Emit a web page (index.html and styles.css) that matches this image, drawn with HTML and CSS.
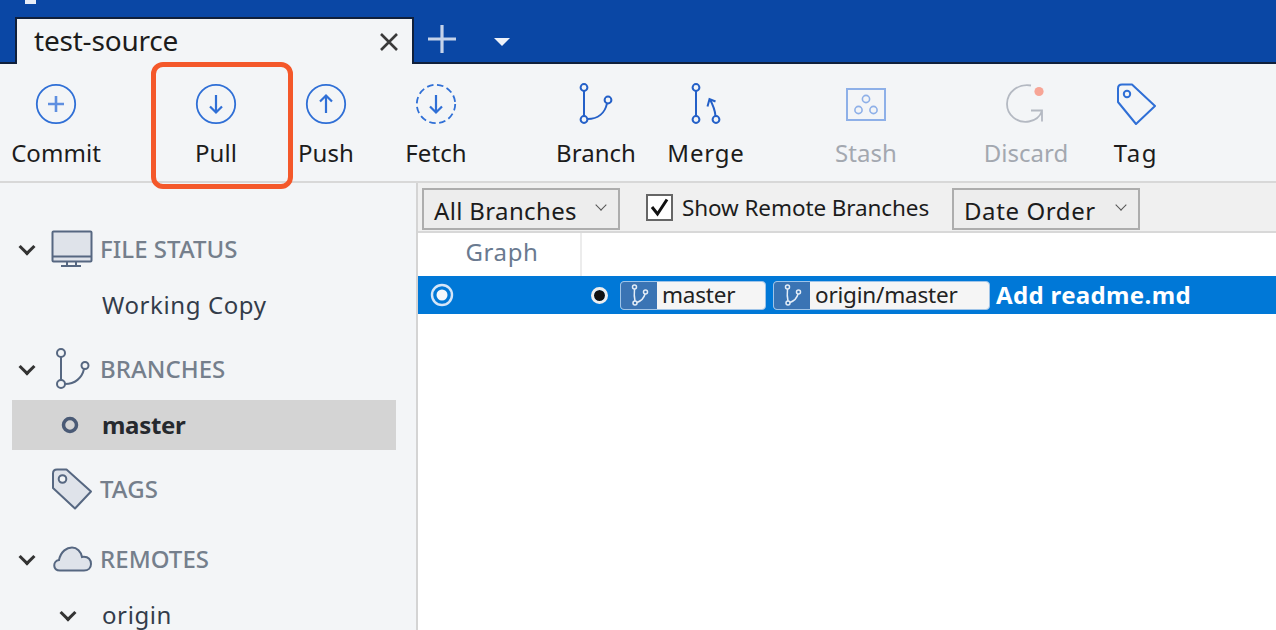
FILE: index.html
```html
<!DOCTYPE html>
<html>
<head>
<title>test-source</title>
<meta charset="utf-8" />
<link rel="stylesheet" href="styles.css">
</head>
<body>

<div class="titlebar">
	<span class="logo-bit"></span>
	<div class="tab">
		<span class="tab-name">test-source</span>
		<svg class="tab-close" width="20" height="20" viewBox="0 0 20 20"><path d="M2 2L18 18M18 2L2 18" stroke="#3a3a3a" stroke-width="2.6" fill="none"/></svg>
	</div>
	<svg class="tab-add" width="30" height="30" viewBox="0 0 30 30"><path d="M15 1V29M1 15H29" stroke="#c5d3ea" stroke-width="3.2" fill="none"/></svg>
	<span class="tab-menu"></span>
</div>

<div class="toolbar">
	<div class="tool">
		<svg class="tool-icon" width="42" height="42" viewBox="0 0 42 42"><circle cx="21" cy="21" r="19.2" fill="none" stroke="#2f6fd6" stroke-width="1.8"/><path d="M21 13V29M13 21H29" stroke="#5f8fe0" stroke-width="2.6" fill="none"/></svg>
		<span class="tool-label">Commit</span>
	</div>
	<div class="tool gap">
		<svg class="tool-icon" width="42" height="42" viewBox="0 0 42 42"><circle cx="21" cy="21" r="19.2" fill="none" stroke="#2f6fd6" stroke-width="1.8"/><path d="M21 12V29M15 23.5L21 29.5L27 23.5" stroke="#2f6fd6" stroke-width="2.2" fill="none"/></svg>
		<span class="tool-label">Pull</span>
	</div>
	<div class="tool">
		<svg class="tool-icon" width="42" height="42" viewBox="0 0 42 42"><circle cx="21" cy="21" r="19.2" fill="none" stroke="#2f6fd6" stroke-width="1.8"/><path d="M21 30V13M15 18.5L21 12.5L27 18.5" stroke="#2f6fd6" stroke-width="2.2" fill="none"/></svg>
		<span class="tool-label">Push</span>
	</div>
	<div class="tool">
		<svg class="tool-icon" width="42" height="42" viewBox="0 0 42 42"><circle cx="21" cy="21" r="19.2" fill="none" stroke="#2f6fd6" stroke-width="1.8" stroke-dasharray="6.5 3.6"/><path d="M21 12V29M15 23.5L21 29.5L27 23.5" stroke="#2f6fd6" stroke-width="2.2" fill="none"/></svg>
		<span class="tool-label">Fetch</span>
	</div>
	<div class="tool gap">
		<svg class="tool-icon" width="42" height="42" viewBox="0 0 42 42"><g fill="none" stroke="#2460c8" stroke-width="2"><circle cx="9" cy="4.5" r="3.4"/><circle cx="9" cy="36.5" r="3.4"/><circle cx="33" cy="17" r="3.4"/><path d="M9 8V33M12.4 36C23 36 30 30 32 20.4"/></g></svg>
		<span class="tool-label">Branch</span>
	</div>
	<div class="tool">
		<svg class="tool-icon" width="42" height="42" viewBox="0 0 42 42"><g fill="none" stroke="#2460c8" stroke-width="2"><circle cx="11" cy="4.5" r="3.4"/><circle cx="11" cy="36.5" r="3.4"/><circle cx="31" cy="36.5" r="3.4"/><path d="M11 8V33M30.500 33C30 27 28 22 25 16.500M22.500 23.500L24.500 16L30.500 18.500"/></g></svg>
		<span class="tool-label spread">Merge</span>
	</div>
	<div class="tool gap off">
		<svg class="tool-icon" width="42" height="42" viewBox="0 0 42 42"><g fill="none" stroke="#8eb0e8" stroke-width="2"><rect x="2" y="6" width="38" height="31"/></g><g fill="none" stroke="#8eb0e8" stroke-width="1.6"><circle cx="21" cy="16" r="3.6"/><circle cx="13.5" cy="27" r="3.6"/><circle cx="28.5" cy="27" r="3.6"/></g></svg>
		<span class="tool-label">Stash</span>
	</div>
	<div class="tool gap off">
		<svg class="tool-icon" width="42" height="42" viewBox="0 0 42 42"><path d="M26 2.500C13 0.500 2 9 2 21C2 32 12 40.500 24 38.500C30 37.500 35 33.500 37 28M37 38.500V27.500H26" fill="none" stroke="#b4b9c2" stroke-width="1.8"/><circle cx="34" cy="8.500" r="4.6" fill="#f7a596"/></svg>
		<span class="tool-label">Discard</span>
	</div>
	<div class="tool">
		<svg class="tool-icon" width="42" height="42" viewBox="0 0 42 42"><path d="M3 5.5Q3 1.5 7 1.5H17L40 23L21 41L3 19Z" fill="none" stroke="#2f6fd6" stroke-width="2" stroke-linejoin="round"/><circle cx="12" cy="11" r="3.2" fill="none" stroke="#2f6fd6" stroke-width="2"/></svg>
		<span class="tool-label spread-more">Tag</span>
	</div>
</div>

<div class="pull-mark"></div>

<div class="content">
	<div class="sidebar">
		<div class="side-row">
			<span class="chev"></span>
			<svg class="side-icon" width="42" height="38" viewBox="0 0 42 38"><rect x="1.5" y="1.5" width="39" height="30" rx="1" fill="#dfe3ea" stroke="#566781" stroke-width="2"/><path d="M1.5 26.5H40.5M10 36H30M16 32V36M25 32V36" stroke="#566781" stroke-width="2" fill="none"/></svg>
			<span class="side-head">FILE STATUS</span>
		</div>
		<div class="side-row item sect-end"><span class="side-text">Working Copy</span></div>

		<div class="side-row">
			<span class="chev"></span>
			<svg class="side-icon" width="42" height="42" viewBox="0 0 42 42"><g fill="none" stroke="#566781" stroke-width="2"><circle cx="10" cy="5" r="4"/><circle cx="10" cy="36" r="4"/><circle cx="34" cy="17.500" r="3.500"/><path d="M10 9V32M14 36C24 36 31 30 33 21"/></g></svg>
			<span class="side-head">BRANCHES</span>
		</div>
		<div class="side-row item active sect-end">
			<svg class="cur-dot" width="18" height="18" viewBox="0 0 18 18"><circle cx="9" cy="9" r="6.500" fill="none" stroke="#4a5a75" stroke-width="3.500"/></svg>
			<span class="side-text">master</span>
		</div>

		<div class="side-row tags-row">
			<svg class="side-icon" width="42" height="42" viewBox="0 0 42 42"><path d="M2 5.500Q2 1.500 6 1.500H15.500L40 23.500L24 40.500L2 20Z" fill="#dfe3ea" stroke="#566781" stroke-width="2" stroke-linejoin="round"/><circle cx="11.500" cy="11" r="3.800" fill="#f3f5f7" stroke="#566781" stroke-width="2"/></svg>
			<span class="side-head">TAGS</span>
		</div>

		<div class="side-row">
			<span class="chev"></span>
			<svg class="side-icon" width="42" height="26" viewBox="0 0 42 26"><path d="M9 24.500C1.500 24.500 1.500 15 8 14C10 5 16 1.500 21 1.500C26 1.500 30 5.500 31 11C38 10 40 14.500 40 18C40 22 37 24.500 33 24.500Z" fill="#dfe3ea" stroke="#566781" stroke-width="2"/></svg>
			<span class="side-head">REMOTES</span>
		</div>
		<div class="side-row item">
			<span class="chev sub"></span>
			<span class="side-text">origin</span>
		</div>
	</div>

	<div class="main">
		<div class="filterbar">
			<div class="select wide"><span>All Branches</span><span class="sel-arrow"></span></div>
			<label class="check">
				<span class="check-box"><svg width="21" height="21" viewBox="0 0 21 21"><path d="M3 10L8.500 17L18 2.500" fill="none" stroke="#111" stroke-width="3"/></svg></span>
				<span>Show Remote Branches</span>
			</label>
			<div class="select"><span>Date Order</span><span class="sel-arrow"></span></div>
		</div>
		<div class="colhead"><div class="col-graph">Graph</div></div>
		<div class="commit">
			<svg class="radio" width="24" height="24" viewBox="0 0 24 24"><circle cx="12" cy="12" r="10" fill="none" stroke="#d5e6f8" stroke-width="2.400"/><circle cx="12" cy="12" r="5.500" fill="#f3f7fb"/></svg>
			<span class="graph-dot"></span>
			<span class="ref">
				<span class="ref-icon"><svg width="22" height="22" viewBox="0 0 22 22"><g fill="none" stroke="#e4edf7" stroke-width="1.500"><circle cx="6.500" cy="3" r="2"/><circle cx="7" cy="19" r="2"/><circle cx="17.500" cy="8" r="2"/><path d="M6.500 5C6 10 6 13 7 17M9 18.500C13 17 16 14 17 10"/></g></svg></span>
				<span class="ref-name">master</span>
			</span>
			<span class="ref second">
				<span class="ref-icon"><svg width="22" height="22" viewBox="0 0 22 22"><g fill="none" stroke="#e4edf7" stroke-width="1.500"><circle cx="6.500" cy="3" r="2"/><circle cx="7" cy="19" r="2"/><circle cx="17.500" cy="8" r="2"/><path d="M6.500 5C6 10 6 13 7 17M9 18.500C13 17 16 14 17 10"/></g></svg></span>
				<span class="ref-name">origin/master</span>
			</span>
			<span class="commit-msg">Add readme.md</span>
		</div>
	</div>
</div>

</body>
</html>
```

FILE: styles.css
```css
html, body {
	margin: 0;
	padding: 0;
	height: 630px;
	overflow: hidden;
}
body {
	position: relative;
	background: #f3f5f7;
	font-family: "Noto Sans", "Noto Sans CJK SC", sans-serif;
	color: #1c1c1c;
}

/* title bar + tab */
.titlebar {
	display: flex;
	align-items: flex-end;
	height: 62px;
	background: #0a47a5;
	border-bottom: 2px solid #10203c;
	box-sizing: content-box;
	padding-left: 15px;
	position: relative;
}
.logo-bit {
	position: absolute;
	left: 25px;
	top: 0;
	width: 11px;
	height: 4px;
	background: #e8eef8;
}
.tab {
	display: flex;
	align-items: center;
	justify-content: space-between;
	box-sizing: border-box;
	width: 399px;
	height: 47px;
	margin-bottom: -2px;
	padding: 0 13px 0 17px;
	background: #f3f5f7;
	border: 2px solid #10203c;
	border-bottom: none;
	font-size: 28px;
}
.tab-name {
	margin-top: -4px;
	letter-spacing: -0.2px;
}
.tab-add {
	margin: 0 0 8px 13px;
}
.tab-menu {
	width: 0;
	height: 0;
	margin: 0 0 16px 37px;
	border: 8px solid transparent;
	border-top: 8px solid #eef2f9;
	border-bottom: none;
}

/* toolbar */
.toolbar {
	display: flex;
	box-sizing: border-box;
	height: 119px;
	padding: 19px 0 0 1px;
	background: #f3f5f7;
	border-bottom: 2px solid #d8d8d8;
}
.tool {
	display: flex;
	flex-direction: column;
	align-items: center;
	width: 110px;
	flex: none;
}
.tool.gap {
	margin-left: 50px;
}
.tool-icon {
	height: 42px;
	flex: none;
}
.tool-label {
	margin-top: 10px;
	font-size: 24px;
	line-height: 36px;
	letter-spacing: 0.05px;
}
.tool-label.spread {
	letter-spacing: 0.8px;
}
.tool-label.spread-more {
	letter-spacing: 1.6px;
}
.off .tool-label {
	color: #a3a8b0;
}
.pull-mark {
	position: absolute;
	left: 151px;
	top: 62px;
	width: 142px;
	height: 127px;
	box-sizing: border-box;
	border: 5px solid #f4582a;
	border-radius: 12px;
}

/* below toolbar */
.content {
	display: flex;
	height: 447px;
}
.sidebar {
	box-sizing: border-box;
	width: 418px;
	padding: 41px 20px 0 12px;
	border-right: 2px solid #d4d4d4;
	overflow: hidden;
	flex: none;
}
.side-row {
	display: flex;
	align-items: center;
	height: 50px;
	margin-bottom: 6px;
	position: relative;
}
.sect-end {
	margin-bottom: 14px;
}
.tags-row {
	margin-bottom: 20px;
}
.chev {
	position: absolute;
	left: 9px;
	top: 17px;
	width: 12px;
	height: 12px;
	box-sizing: border-box;
	border-right: 3.5px solid #333;
	border-bottom: 3.5px solid #333;
	transform: rotate(45deg);
}
.chev.sub {
	left: 50px;
}
.side-icon {
	position: absolute;
	left: 39px;
}
.side-head {
	margin: -2px 0 0 88px;
	font-size: 24px;
	font-weight: 500;
	letter-spacing: 0.05px;
	color: #757f8c;
}
.side-text {
	margin: -2px 0 0 90px;
	font-size: 24px;
	letter-spacing: 0.6px;
	color: #333c4a;
}
.active {
	background: #d4d4d4;
}
.active .side-text {
	font-weight: 700;
	letter-spacing: -0.3px;
	color: #26292e;
}
.cur-dot {
	position: absolute;
	left: 49px;
}

/* commit list */
.main {
	flex: 1;
	background: #fff;
}
.filterbar {
	display: flex;
	align-items: flex-start;
	box-sizing: border-box;
	height: 50px;
	padding: 5px 0 0 4px;
	background: #f0f0f0;
	border-bottom: 2px solid #d8d8d8;
}
.select {
	display: flex;
	align-items: center;
	box-sizing: border-box;
	width: 188px;
	height: 42px;
	padding-left: 10px;
	border: 2px solid #adadad;
	background: #ededed;
	font-size: 24px;
	letter-spacing: 0.6px;
	position: relative;
}
.select.wide {
	width: 198px;
	letter-spacing: 0.35px;
}
.select > span:first-child {
	margin-top: 2px;
}
.sel-arrow {
	position: absolute;
	right: 13px;
	top: 11px;
	width: 8px;
	height: 8px;
	box-sizing: border-box;
	border-right: 1.5px solid #555;
	border-bottom: 1.5px solid #555;
	transform: rotate(45deg);
}
.check {
	display: flex;
	align-items: center;
	width: 306px;
	height: 38px;
	margin-left: 26px;
	font-size: 22.500px;
	letter-spacing: -0.1px;
}
.check-box {
	display: flex;
	align-items: center;
	justify-content: center;
	box-sizing: border-box;
	width: 27px;
	height: 27px;
	margin-right: 9px;
	background: #fff;
	border: 2px solid #666;
}
.colhead {
	height: 43px;
}
.col-graph {
	box-sizing: border-box;
	width: 164px;
	height: 43px;
	padding-left: 6px;
	border-right: 2px solid #ececec;
	text-align: center;
	font-size: 24px;
	line-height: 38px;
	color: #6a7a90;
	letter-spacing: 0.6px;
}
.commit {
	display: flex;
	align-items: center;
	height: 38px;
	background: #0078d7;
	position: relative;
}
.radio {
	position: absolute;
	left: 12px;
	top: 7px;
}
.graph-dot {
	box-sizing: border-box;
	width: 17px;
	height: 17px;
	margin-left: 173px;
	background: #111;
	border: 3px solid #eee;
	border-radius: 50%;
	background-clip: padding-box;
}
.ref {
	display: flex;
	align-items: center;
	box-sizing: border-box;
	width: 146px;
	height: 29px;
	margin-left: 12px;
	background: #f5f5f5;
	border: 1px solid #9fc4e8;
	border-radius: 4px;
	font-size: 22.500px;
	line-height: 25px;
	color: #222;
}
.ref.second {
	width: 217px;
	margin-left: 7px;
}
.ref-icon {
	display: flex;
	align-items: center;
	justify-content: center;
	width: 36px;
	height: 100%;
	background: #3a74b4;
	border-radius: 3px 0 0 3px;
	flex: none;
}
.ref-name {
	margin: -2px 0 0 5px;
	letter-spacing: -0.2px;
}
.commit-msg {
	margin: -2px 0 0 6px;
	font-size: 24px;
	font-weight: 700;
	color: #fff;
	letter-spacing: 0.35px;
}
```
